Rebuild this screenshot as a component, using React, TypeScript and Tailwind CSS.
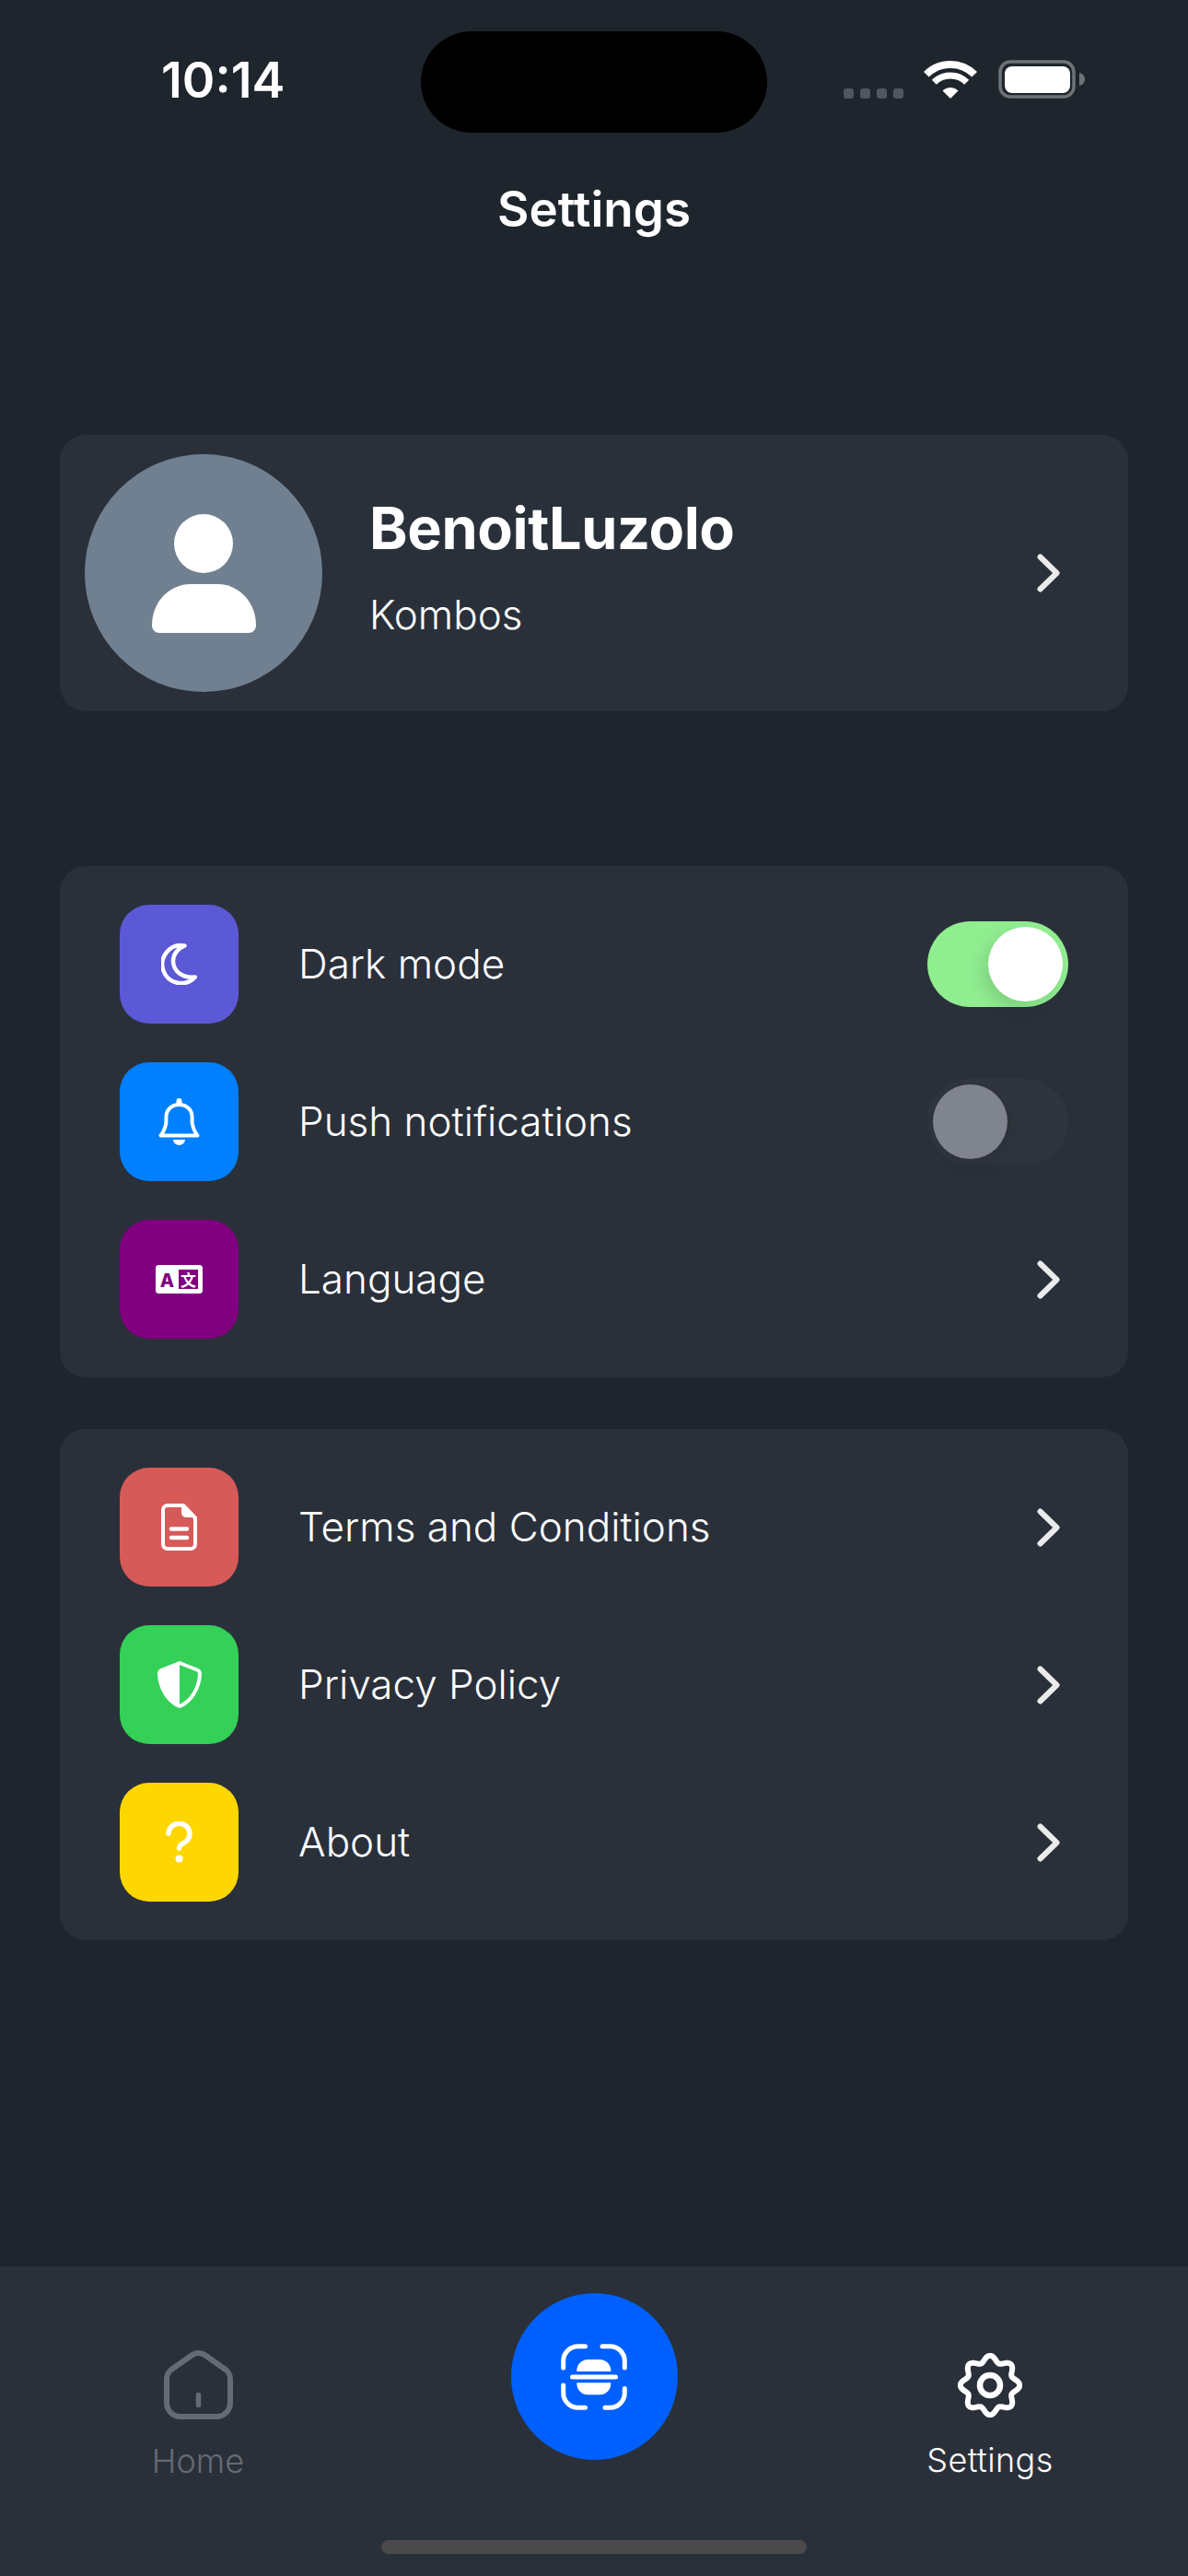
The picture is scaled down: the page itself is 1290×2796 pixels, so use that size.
const gearPath = () => {
  const pts: string[] = [];
  for (let i = 0; i < 240; i++) {
    const a = (i / 240) * Math.PI * 2;
    const r = 28.8 + 3.4 * Math.cos(8 * a);
    pts.push(`${(35 + r * Math.sin(a)).toFixed(2)} ${(35 - r * Math.cos(a)).toFixed(2)}`);
  }
  return 'M' + pts.join('L') + 'Z';
};

function Chevron() {
  return (
    <svg width="25" height="42" viewBox="0 0 25 42" fill="none" className="shrink-0">
      <path d="M3.5 3.5 21.5 21 3.5 38.5" stroke="#ebebeb" strokeWidth="6" strokeLinecap="round" strokeLinejoin="round" />
    </svg>
  );
}

function Toggle({ on }: { on: boolean }) {
  return (
    <div className={`flex h-[93px] w-[153px] rounded-full p-[6px] ${on ? 'justify-end bg-[#90ee90]' : 'justify-start bg-[#2f343d]'}`}>
      <div className={`h-[81px] w-[81px] rounded-full ${on ? 'bg-white shadow-[-6px_8px_18px_rgba(0,0,0,0.12)]' : 'bg-[#80848e] shadow-[6px_8px_18px_rgba(0,0,0,0.06)]'}`} />
    </div>
  );
}

function IconBox({ color, children }: { color: string; children: React.ReactNode }) {
  return (
    <div className={`flex h-[129px] w-[129px] shrink-0 items-center justify-center rounded-[32px] ${color}`}>
      {children}
    </div>
  );
}

function Row({ icon, label, right }: { icon: React.ReactNode; label: string; right: React.ReactNode }) {
  return (
    <div className="flex h-[129px] items-center">
      {icon}
      <span className="mb-[1px] ml-[65px] flex-1 text-[44px] font-[350] text-white">{label}</span>
      {right}
    </div>
  );
}

function RowChevron() {
  return (
    <div className="mr-[9px]">
      <Chevron />
    </div>
  );
}

const MoonIcon = (
  <svg width="39" height="45" viewBox="0 0 39 45" fill="none">
    <path
      d="M25.5 2.5A20.5 20.5 0 1 0 36.8 36.5C24 38 13.5 31 13 19.5 12.7 12 18 5.5 25.5 2.5Z"
      stroke="white"
      strokeWidth="4.5"
      strokeLinejoin="round"
    />
  </svg>
);

const BellIcon = (
  <svg width="45" height="51" viewBox="0 0 45 51" fill="none">
    <path
      d="M2.5 40.5H42.5C39 36 37.5 32 36.6 27V20.5C36.6 12.5 30.5 7 22.5 7S8.4 12.5 8.4 20.5V27C7.5 32 6 36 2.5 40.5Z"
      stroke="white"
      strokeWidth="4"
      strokeLinejoin="round"
    />
    <rect x="19.5" y="0" width="6" height="8" rx="3" fill="white" />
    <path d="M16 45H29A6.5 6 0 0 1 16 45Z" fill="white" />
  </svg>
);

const LanguageIcon = (
  <svg width="51" height="31" viewBox="0 0 51 31">
    <rect width="51" height="31" rx="3.5" fill="white" />
    <rect x="25" y="5" width="21" height="21" fill="#800080" />
    <text x="12.5" y="24" textAnchor="middle" fontSize="20" fontWeight="800" fill="#800080" fontFamily="Inter, sans-serif">
      A
    </text>
    <text x="35.5" y="22.5" textAnchor="middle" fontSize="17" fontWeight="700" fill="white" fontFamily="'Noto Sans CJK SC', sans-serif">
      文
    </text>
  </svg>
);

const DocIcon = (
  <svg width="39" height="51" viewBox="0 0 39 51" fill="none">
    <path
      d="M7 2H24L37 15.5V44A5 5 0 0 1 32 49H7A5 5 0 0 1 2 44V7A5 5 0 0 1 7 2Z"
      stroke="white"
      strokeWidth="4"
      strokeLinejoin="round"
    />
    <path d="M22 2H25L37.5 15H27A5 5 0 0 1 22 10Z" fill="white" />
    <path d="M11 27.5H28M11 37H28" stroke="white" strokeWidth="4.5" strokeLinecap="round" />
  </svg>
);

const ShieldIcon = (
  <svg width="48" height="51" viewBox="0 0 48 51" fill="none">
    <path
      d="M24 2 43 9.5C45 10.3 46 11.5 46 13.5 45.5 30 36 44 24 49 12 44 2.5 30 2 13.5 2 11.5 3 10.3 5 9.5Z"
      stroke="white"
      strokeWidth="4"
      strokeLinejoin="round"
    />
    <path d="M24 2 5 9.5C3 10.3 2 11.5 2 13.5 2.5 30 12 44 24 49Z" fill="white" />
  </svg>
);

const QuestionIcon = (
  <svg width="29" height="45" viewBox="0 0 29 45" fill="none">
    <path d="M3 13A11.5 11 0 1 1 21.5 22C17.5 24.5 14.5 26 14.5 29" stroke="white" strokeWidth="5.5" strokeLinecap="round" />
    <circle cx="14.5" cy="40.5" r="4" fill="white" />
  </svg>
);

const HomeIcon = (
  <svg width="75" height="75" viewBox="0 0 75 75" fill="none">
    <path
      d="M3 31V57A15 15 0 0 0 18 72H57A15 15 0 0 0 72 57V31A13 13 0 0 0 67 21L45 5.5A13 13 0 0 0 30 5.5L8 21A13 13 0 0 0 3 31Z"
      stroke="#656b74"
      strokeWidth="6"
      strokeLinejoin="round"
    />
    <path d="M37.5 48.5V59.5" stroke="#656b74" strokeWidth="5.5" strokeLinecap="round" />
  </svg>
);

const ScanIcon = (
  <svg width="72" height="72" viewBox="0 0 72 72" fill="none">
    <g stroke="white" strokeWidth="5" strokeLinecap="round">
      <path d="M2.7 26V19A16 16 0 0 1 18.7 2.7H26.5" />
      <path d="M45 2.7H53A16 16 0 0 1 69.3 19V26" />
      <path d="M2.7 45V53A16 16 0 0 0 18.7 69.3H26.5" />
      <path d="M69.3 48.5V53A16 16 0 0 1 53 69.3H48" />
      <path d="M12.5 36H59.5" />
    </g>
    <path d="M17.3 30V29A12 12 0 0 1 29.3 17H42.3A12 12 0 0 1 54.3 29V30Z" fill="white" />
    <path d="M17.3 42.3H54.3V43.3A12 12 0 0 1 42.3 55.3H29.3A12 12 0 0 1 17.3 43.3Z" fill="white" />
  </svg>
);

const GearIcon = (
  <svg width="70" height="70" viewBox="0 0 70 70" fill="none">
    <path d={gearPath()} stroke="white" strokeWidth="6" strokeLinejoin="round" />
    <circle cx="35" cy="35" r="11" stroke="white" strokeWidth="6.5" />
  </svg>
);

function StatusIcons() {
  return (
    <div className="flex items-end">
      <div className="flex gap-[7px]">
        <div className="h-[11px] w-[11px] rounded-[3px] bg-[#52565e]" />
        <div className="h-[11px] w-[11px] rounded-[3px] bg-[#52565e]" />
        <div className="h-[11px] w-[11px] rounded-[3px] bg-[#52565e]" />
        <div className="h-[11px] w-[11px] rounded-[3px] bg-[#52565e]" />
      </div>
      <svg width="58" height="42" viewBox="0 0 58 42" fill="none" className="ml-[22px]">
        <path d="M2.8 15.8A37 37 0 0 1 55.2 15.8" stroke="white" strokeWidth="8" />
        <path d="M11.3 24.3A25 25 0 0 1 46.7 24.3" stroke="white" strokeWidth="7" />
        <path d="M20.5 33.5A12 12 0 0 1 37.5 33.5L29 42Z" fill="white" />
      </svg>
      <svg width="95" height="42" viewBox="0 0 95 42" fill="none" className="ml-[23px]">
        <rect x="2" y="2" width="80" height="38" rx="11" stroke="#6f7378" strokeWidth="3.5" />
        <rect x="7" y="7" width="71" height="29" rx="8" fill="white" />
        <path d="M88 14C92 15 94 18 94 21S92 27 88 28Z" fill="#6f7378" />
      </svg>
    </div>
  );
}

export default function App() {
  return (
    <div className="flex h-[2796px] w-[1290px] flex-col bg-[#1f252d] font-['Inter',sans-serif] text-white">
      <div className="mt-[34px] flex h-[110px] shrink-0 items-center">
        <div className="mb-[4px] w-[457px] pl-[175px] text-[54px] font-semibold leading-none">10:14</div>
        <div className="h-[110px] w-[376px] rounded-full bg-black" />
        <div className="mb-[6px] pl-[83px]">
          <StatusIcons />
        </div>
      </div>

      <h1 className="mt-[51px] mb-[1px] text-center text-[53px] font-semibold leading-[64px]">Settings</h1>

      <div className="flex flex-1 flex-col px-[65px] pt-[212px]">
        <div className="flex h-[300px] items-center rounded-[28px] bg-[#2a303a] pl-[27px] pr-[74px]">
          <svg width="258" height="258" viewBox="0 0 258 258" className="shrink-0">
            <circle cx="129" cy="129" r="129" fill="#708090" />
            <circle cx="129" cy="97" r="32" fill="white" />
            <path d="M73 186C73 160 92 141 115 141H144C167 141 186 160 186 186A8 8 0 0 1 178 194H81A8 8 0 0 1 73 186Z" fill="white" />
          </svg>
          <div className="mb-[15px] ml-[51px] flex-1">
            <div className="text-[63px] font-bold leading-[76px] tracking-[-0.4px]">BenoitLuzolo</div>
            <div className="mt-[29px] text-[44px] font-[350] leading-[54px]">Kombos</div>
          </div>
          <Chevron />
        </div>

        <div className="mt-[168px] flex flex-col gap-[42px] rounded-[28px] bg-[#2a303a] px-[65px] py-[42px]">
          <Row icon={<IconBox color="bg-[#5b59d6]">{MoonIcon}</IconBox>} label="Dark mode" right={<Toggle on />} />
          <Row icon={<IconBox color="bg-[#0080ff]">{BellIcon}</IconBox>} label="Push notifications" right={<Toggle on={false} />} />
          <Row icon={<IconBox color="bg-[#800080]">{LanguageIcon}</IconBox>} label="Language" right={<RowChevron />} />
        </div>

        <div className="mt-[56px] flex flex-col gap-[42px] rounded-[28px] bg-[#2a303a] px-[65px] py-[42px]">
          <Row icon={<IconBox color="bg-[#d55a58]">{DocIcon}</IconBox>} label="Terms and Conditions" right={<RowChevron />} />
          <Row icon={<IconBox color="bg-[#34d058]">{ShieldIcon}</IconBox>} label="Privacy Policy" right={<RowChevron />} />
          <Row icon={<IconBox color="bg-[#ffd700]">{QuestionIcon}</IconBox>} label="About" right={<RowChevron />} />
        </div>
      </div>

      <div className="flex h-[336px] shrink-0 flex-col items-center bg-[#2a303a] pt-[29px]">
        <div className="grid h-[181px] w-full grid-cols-[430px_430px_430px]">
          <div className="flex flex-col items-center pt-[62px]">
            {HomeIcon}
            <span className="mt-[23px] text-[36px] font-[350] leading-[44px] text-[#656b74]">Home</span>
          </div>
          <div className="flex justify-center">
            <div className="flex h-[181px] w-[181px] items-center justify-center rounded-full bg-[#0060ff]">{ScanIcon}</div>
          </div>
          <div className="flex flex-col items-center pt-[65px]">
            {GearIcon}
            <span className="mt-[24px] text-[36px] font-[350] leading-[44px] tracking-[0.4px]">Settings</span>
          </div>
        </div>
        <div className="mt-[87px] h-[15px] w-[462px] rounded-full bg-[#4a4a4a]" />
      </div>
    </div>
  );
}
